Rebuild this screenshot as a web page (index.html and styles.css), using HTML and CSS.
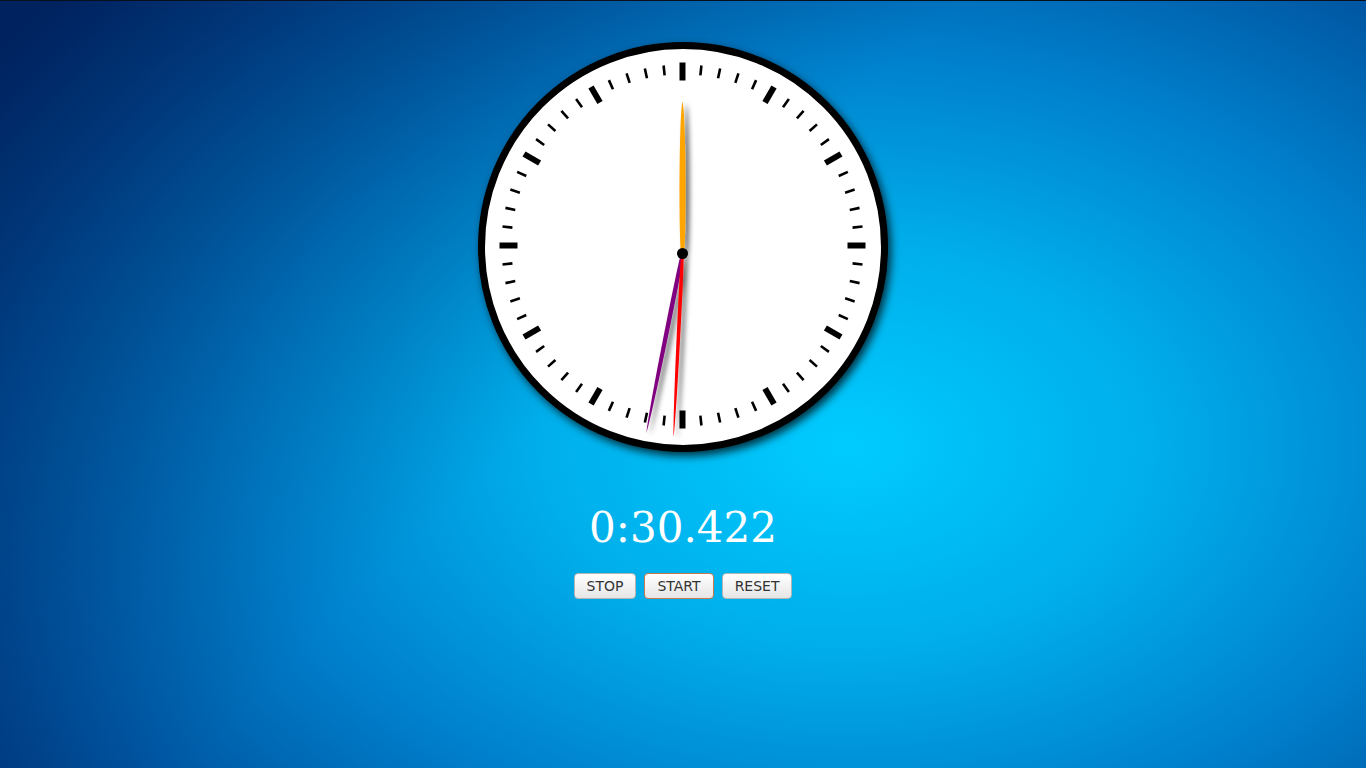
FILE: index.html
```html
<!DOCTYPE html>
<html>
<head>
<meta charset="utf-8">
<title>Stopwatch</title>
<link rel="stylesheet" href="styles.css">
</head>
<body>
<main class="page">
  <div class="clock">
    <svg class="face" viewBox="-198 -198 396 396" width="396" height="396">
      <defs>
        <filter id="sh" x="-50%" y="-10%" width="200%" height="120%">
          <feDropShadow dx="4" dy="2" stdDeviation="2.4" flood-color="#000" flood-opacity="0.6"/>
        </filter>
      </defs>
      <g class="ticks" transform="translate(-0.5,-1.5)">
        <g class="major">
          <line x1="0" y1="-183" x2="0" y2="-165" transform="rotate(0)"/>
          <line x1="0" y1="-183" x2="0" y2="-165" transform="rotate(30)"/>
          <line x1="0" y1="-183" x2="0" y2="-165" transform="rotate(60)"/>
          <line x1="0" y1="-183" x2="0" y2="-165" transform="rotate(90)"/>
          <line x1="0" y1="-183" x2="0" y2="-165" transform="rotate(120)"/>
          <line x1="0" y1="-183" x2="0" y2="-165" transform="rotate(150)"/>
          <line x1="0" y1="-183" x2="0" y2="-165" transform="rotate(180)"/>
          <line x1="0" y1="-183" x2="0" y2="-165" transform="rotate(210)"/>
          <line x1="0" y1="-183" x2="0" y2="-165" transform="rotate(240)"/>
          <line x1="0" y1="-183" x2="0" y2="-165" transform="rotate(270)"/>
          <line x1="0" y1="-183" x2="0" y2="-165" transform="rotate(300)"/>
          <line x1="0" y1="-183" x2="0" y2="-165" transform="rotate(330)"/>
        </g>
        <g class="minor">
          <line x1="0" y1="-181" x2="0" y2="-171" transform="rotate(6)"/>
          <line x1="0" y1="-181" x2="0" y2="-171" transform="rotate(12)"/>
          <line x1="0" y1="-181" x2="0" y2="-171" transform="rotate(18)"/>
          <line x1="0" y1="-181" x2="0" y2="-171" transform="rotate(24)"/>
          <line x1="0" y1="-181" x2="0" y2="-171" transform="rotate(36)"/>
          <line x1="0" y1="-181" x2="0" y2="-171" transform="rotate(42)"/>
          <line x1="0" y1="-181" x2="0" y2="-171" transform="rotate(48)"/>
          <line x1="0" y1="-181" x2="0" y2="-171" transform="rotate(54)"/>
          <line x1="0" y1="-181" x2="0" y2="-171" transform="rotate(66)"/>
          <line x1="0" y1="-181" x2="0" y2="-171" transform="rotate(72)"/>
          <line x1="0" y1="-181" x2="0" y2="-171" transform="rotate(78)"/>
          <line x1="0" y1="-181" x2="0" y2="-171" transform="rotate(84)"/>
          <line x1="0" y1="-181" x2="0" y2="-171" transform="rotate(96)"/>
          <line x1="0" y1="-181" x2="0" y2="-171" transform="rotate(102)"/>
          <line x1="0" y1="-181" x2="0" y2="-171" transform="rotate(108)"/>
          <line x1="0" y1="-181" x2="0" y2="-171" transform="rotate(114)"/>
          <line x1="0" y1="-181" x2="0" y2="-171" transform="rotate(126)"/>
          <line x1="0" y1="-181" x2="0" y2="-171" transform="rotate(132)"/>
          <line x1="0" y1="-181" x2="0" y2="-171" transform="rotate(138)"/>
          <line x1="0" y1="-181" x2="0" y2="-171" transform="rotate(144)"/>
          <line x1="0" y1="-181" x2="0" y2="-171" transform="rotate(156)"/>
          <line x1="0" y1="-181" x2="0" y2="-171" transform="rotate(162)"/>
          <line x1="0" y1="-181" x2="0" y2="-171" transform="rotate(168)"/>
          <line x1="0" y1="-181" x2="0" y2="-171" transform="rotate(174)"/>
          <line x1="0" y1="-181" x2="0" y2="-171" transform="rotate(186)"/>
          <line x1="0" y1="-181" x2="0" y2="-171" transform="rotate(192)"/>
          <line x1="0" y1="-181" x2="0" y2="-171" transform="rotate(198)"/>
          <line x1="0" y1="-181" x2="0" y2="-171" transform="rotate(204)"/>
          <line x1="0" y1="-181" x2="0" y2="-171" transform="rotate(216)"/>
          <line x1="0" y1="-181" x2="0" y2="-171" transform="rotate(222)"/>
          <line x1="0" y1="-181" x2="0" y2="-171" transform="rotate(228)"/>
          <line x1="0" y1="-181" x2="0" y2="-171" transform="rotate(234)"/>
          <line x1="0" y1="-181" x2="0" y2="-171" transform="rotate(246)"/>
          <line x1="0" y1="-181" x2="0" y2="-171" transform="rotate(252)"/>
          <line x1="0" y1="-181" x2="0" y2="-171" transform="rotate(258)"/>
          <line x1="0" y1="-181" x2="0" y2="-171" transform="rotate(264)"/>
          <line x1="0" y1="-181" x2="0" y2="-171" transform="rotate(276)"/>
          <line x1="0" y1="-181" x2="0" y2="-171" transform="rotate(282)"/>
          <line x1="0" y1="-181" x2="0" y2="-171" transform="rotate(288)"/>
          <line x1="0" y1="-181" x2="0" y2="-171" transform="rotate(294)"/>
          <line x1="0" y1="-181" x2="0" y2="-171" transform="rotate(306)"/>
          <line x1="0" y1="-181" x2="0" y2="-171" transform="rotate(312)"/>
          <line x1="0" y1="-181" x2="0" y2="-171" transform="rotate(318)"/>
          <line x1="0" y1="-181" x2="0" y2="-171" transform="rotate(324)"/>
          <line x1="0" y1="-181" x2="0" y2="-171" transform="rotate(336)"/>
          <line x1="0" y1="-181" x2="0" y2="-171" transform="rotate(342)"/>
          <line x1="0" y1="-181" x2="0" y2="-171" transform="rotate(348)"/>
          <line x1="0" y1="-181" x2="0" y2="-171" transform="rotate(354)"/>
        </g>
      </g>
      <g class="hands" transform="translate(-0.5,6.5)" filter="url(#sh)">
        <path class="hand-hour" d="M0,-152 C3.6,-138 3.8,-20 1.6,0 L-1.6,0 C-3.8,-20 -3.6,-138 0,-152 Z"/>
        <path class="hand-min" d="M0,-183 C2.4,-160 2.8,-20 1.5,0 L-1.5,0 C-2.8,-20 -2.4,-160 0,-183 Z" transform="rotate(191.4)"/>
        <path class="hand-sec" d="M0,-184 C1.9,-160 2.3,-20 1.3,0 L-1.3,0 C-2.3,-20 -1.9,-160 0,-184 Z" transform="rotate(182.8)"/>
      </g>
      <circle class="hub" cx="-0.5" cy="6.5" r="5.5"/>
    </svg>
  </div>
  <div class="time">0:30.422</div>
  <div class="controls">
    <button class="btn" type="button">STOP</button>
    <button class="btn btn-focus" type="button">START</button>
    <button class="btn" type="button">RESET</button>
  </div>
</main>
</body>
</html>
```

FILE: styles.css
```css
html, body {
  margin: 0;
  padding: 0;
  height: 100%;
}

body {
  background:
    linear-gradient(135deg, rgba(0, 10, 60, 0.5) 0%, rgba(0, 10, 60, 0) 45%),
    radial-gradient(ellipse 75% 88% at 62% 58%, #00ccff 0%, #00aeea 30%, #0080cc 58%, #00529e 85%, #003a80 100%);
  border-top: 1px solid #0a0f1e;
  box-sizing: border-box;
  overflow: hidden;
}

.page {
  display: flex;
  flex-direction: column;
  align-items: center;
  padding-top: 41px;
}

.clock {
  width: 410px;
  height: 410px;
  box-sizing: border-box;
  border: 7px solid #000;
  border-radius: 50%;
  background: #fff;
  box-shadow: 3px 4px 8px rgba(0, 0, 0, 0.75);
}

.face {
  display: block;
  overflow: visible;
}

.major line {
  stroke: #000;
  stroke-width: 6;
}

.minor line {
  stroke: #000;
  stroke-width: 2.6;
}

.hand-hour { fill: #ffa500; }
.hand-min { fill: #800080; }
.hand-sec { fill: #ff0000; }
.hub { fill: #000; }

.time {
  margin-top: 51px;
  font-family: "DejaVu Serif", serif;
  font-size: 42px;
  line-height: 50px;
  color: #fff;
}

.controls {
  margin-top: 20px;
  display: flex;
  gap: 8px;
}

.btn {
  height: 26px;
  padding: 0 12px;
  font-family: "DejaVu Sans", sans-serif;
  font-size: 14px;
  color: #333;
  background: linear-gradient(#ffffff, #e6e6e6);
  border: 1px solid #b4b4b4;
  border-radius: 4px;
  line-height: 24px;
}

.btn-focus {
  border-color: #c8784e;
}
```
